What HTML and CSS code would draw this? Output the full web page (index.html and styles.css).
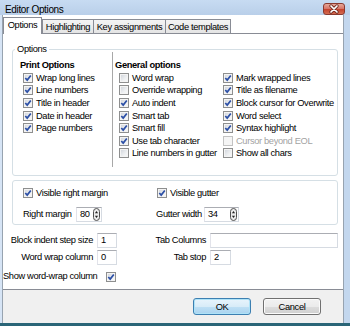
FILE: index.html
```html
<!DOCTYPE html>
<html>
<head>
<meta charset="utf-8">
<link rel="stylesheet" href="styles.css">
</head>
<body>
<div class="window">
  <div class="titlebar">
    <span class="title">Editor Options</span>
    <span class="close"><svg viewBox="0 0 22 12" width="22" height="12"><path d="M8 3 L14 9 M14 3 L8 9" stroke="#6e2a22" stroke-width="3.2" stroke-linecap="round"/><path d="M8 3 L14 9 M14 3 L8 9" stroke="#fff" stroke-width="1.7" stroke-linecap="round"/></svg></span>
  </div>
  <div class="frame">
    <div class="client">
      <div class="tabs">
        <div class="tab active">Options</div>
        <div class="tab t-hl">Highlighting</div>
        <div class="tab t-key">Key assignments</div>
        <div class="tab t-code">Code templates</div>
      </div>
      <div class="panel">
        <fieldset class="group-options">
          <legend>Options</legend>
          <div class="col col-print">
            <div class="head">Print Options</div>
            <div class="cb"><span class="box"><svg viewBox="0 0 8 8"><path d="M1.3 4 L3.2 6.1 L6.8 1.5"/></svg></span><span>Wrap long lines</span></div>
            <div class="cb"><span class="box"><svg viewBox="0 0 8 8"><path d="M1.3 4 L3.2 6.1 L6.8 1.5"/></svg></span><span>Line numbers</span></div>
            <div class="cb"><span class="box"><svg viewBox="0 0 8 8"><path d="M1.3 4 L3.2 6.1 L6.8 1.5"/></svg></span><span>Title in header</span></div>
            <div class="cb"><span class="box"><svg viewBox="0 0 8 8"><path d="M1.3 4 L3.2 6.1 L6.8 1.5"/></svg></span><span>Date in header</span></div>
            <div class="cb"><span class="box"><svg viewBox="0 0 8 8"><path d="M1.3 4 L3.2 6.1 L6.8 1.5"/></svg></span><span>Page numbers</span></div>
          </div>
          <div class="sep"></div>
          <div class="col col-general">
            <div class="head">General options</div>
            <div class="cb"><span class="box"></span><span>Word wrap</span></div>
            <div class="cb"><span class="box"></span><span>Override wrapping</span></div>
            <div class="cb"><span class="box"><svg viewBox="0 0 8 8"><path d="M1.3 4 L3.2 6.1 L6.8 1.5"/></svg></span><span>Auto indent</span></div>
            <div class="cb"><span class="box"><svg viewBox="0 0 8 8"><path d="M1.3 4 L3.2 6.1 L6.8 1.5"/></svg></span><span>Smart tab</span></div>
            <div class="cb"><span class="box"><svg viewBox="0 0 8 8"><path d="M1.3 4 L3.2 6.1 L6.8 1.5"/></svg></span><span>Smart fill</span></div>
            <div class="cb"><span class="box"><svg viewBox="0 0 8 8"><path d="M1.3 4 L3.2 6.1 L6.8 1.5"/></svg></span><span>Use tab character</span></div>
            <div class="cb"><span class="box"></span><span>Line numbers in gutter</span></div>
          </div>
          <div class="col col-extra">
            <div class="cb"><span class="box"><svg viewBox="0 0 8 8"><path d="M1.3 4 L3.2 6.1 L6.8 1.5"/></svg></span><span>Mark wrapped lines</span></div>
            <div class="cb"><span class="box"><svg viewBox="0 0 8 8"><path d="M1.3 4 L3.2 6.1 L6.8 1.5"/></svg></span><span>Title as filename</span></div>
            <div class="cb"><span class="box"><svg viewBox="0 0 8 8"><path d="M1.3 4 L3.2 6.1 L6.8 1.5"/></svg></span><span>Block cursor for Overwrite</span></div>
            <div class="cb"><span class="box"><svg viewBox="0 0 8 8"><path d="M1.3 4 L3.2 6.1 L6.8 1.5"/></svg></span><span>Word select</span></div>
            <div class="cb"><span class="box"><svg viewBox="0 0 8 8"><path d="M1.3 4 L3.2 6.1 L6.8 1.5"/></svg></span><span>Syntax highlight</span></div>
            <div class="cb disabled"><span class="box"></span><span>Cursor beyond EOL</span></div>
            <div class="cb"><span class="box"></span><span>Show all chars</span></div>
          </div>
        </fieldset>

        <div class="group-margins">
          <div class="mcol mcol-a">
            <div class="cb"><span class="box"><svg viewBox="0 0 8 8"><path d="M1.3 4 L3.2 6.1 L6.8 1.5"/></svg></span><span>Visible right margin</span></div>
            <div class="field">
              <span class="flabel fl-rm">Right margin</span>
              <div class="inp spin-inp w-rm"><span>80</span><svg class="spin" viewBox="0 0 7 13"><rect x="0.5" y="0.5" width="6" height="12" rx="3" fill="#ececec" stroke="#505050"/><path d="M1.9 5.3 L3.5 3 L5.1 5.3Z M1.9 7.7 L3.5 10 L5.1 7.7Z" fill="#202020"/></svg></div>
            </div>
          </div>
          <div class="mcol mcol-b">
            <div class="cb"><span class="box"><svg viewBox="0 0 8 8"><path d="M1.3 4 L3.2 6.1 L6.8 1.5"/></svg></span><span>Visible gutter</span></div>
            <div class="field">
              <span class="flabel fl-gw">Gutter width</span>
              <div class="inp spin-inp w-gw"><span>34</span><svg class="spin" viewBox="0 0 7 13"><rect x="0.5" y="0.5" width="6" height="12" rx="3" fill="#ececec" stroke="#505050"/><path d="M1.9 5.3 L3.5 3 L5.1 5.3Z M1.9 7.7 L3.5 10 L5.1 7.7Z" fill="#202020"/></svg></div>
            </div>
          </div>
        </div>

        <div class="fields">
          <span class="glabel">Block indent step size</span>
          <div class="inp">1</div>
          <span class="glabel">Tab Columns</span>
          <div class="inp"></div>

          <span class="glabel">Word wrap column</span>
          <div class="inp">0</div>
          <span class="glabel">Tab stop</span>
          <div class="inp w-ts">2</div>

          <span class="glabel row3">Show word-wrap column</span>
          <div class="row3 cb-cell"><span class="box"><svg viewBox="0 0 8 8"><path d="M1.3 4 L3.2 6.1 L6.8 1.5"/></svg></span></div>
        </div>
      </div>
      <div class="footer">
        <button class="btn default">OK</button>
        <button class="btn">Cancel</button>
      </div>
    </div>
  </div>
</div>
</body>
</html>
```

FILE: styles.css
```css
html, body {
  margin: 0;
  padding: 0;
  background: #fff;
}

body {
  font-family: "Liberation Sans", Arial, sans-serif;
  font-size: 9.3px;
  letter-spacing: -0.35px;
  color: #000;
}

.window {
  width: 350px;
  height: 326px;
  box-sizing: border-box;
  display: flex;
  flex-direction: column;
  border-bottom: 3px solid #2a6577;
  background: #c6d9ef;
}

.titlebar {
  height: 15px;
  flex: none;
  display: flex;
  justify-content: space-between;
  align-items: flex-start;
  padding: 0 5px 0 5px;
  background: linear-gradient(#c7dbf2, #b9cfe9);
}

.title {
  font-size: 10px;
  line-height: 13px;
  padding-top: 3px;
  color: #000;
}

.close {
  width: 22px;
  height: 12px;
  margin-top: 3px;
  box-sizing: border-box;
  border: 1px solid #8a3a30;
  border-radius: 3px;
  background: linear-gradient(#e6a899 0%, #d8776a 45%, #c5452f 55%, #d56c50 100%);
  display: flex;
  align-items: center;
  justify-content: center;
  overflow: hidden;
}

.close svg {
  display: block;
  margin: -1px;
}

.frame {
  flex: 1;
  display: flex;
  border-left: 2px solid #d6e4f5;
  border-right: 6px solid #c3d7ee;
  min-height: 0;
}

.client {
  flex: 1;
  min-width: 0;
  display: flex;
  flex-direction: column;
  background: #fff;
  border-left: 1px solid #97a3b0;
  border-right: 1px solid #97a3b0;
}

.tabs {
  height: 18px;
  flex: none;
  display: flex;
  align-items: flex-end;
}

.tab {
  box-sizing: border-box;
  height: 14px;
  border: 1px solid #898c95;
  border-bottom: none;
  background: linear-gradient(#f4f4f4, #e4e4e4);
  display: flex;
  align-items: center;
  justify-content: center;
  white-space: nowrap;
  line-height: 12px;
}

.tab.active {
  width: 39px;
  height: 17px;
  margin-bottom: -1px;
  background: #fff;
  z-index: 1;
  padding-bottom: 2px;
}

.t-hl { width: 52px; }
.t-key { width: 73px; margin-left: -1px; }
.t-code { width: 66px; margin-left: -1px; }

.panel {
  height: 257px;
  box-sizing: border-box;
  flex: none;
  border-top: 1px solid #898c95;
  border-bottom: 1px solid #898c95;
  background: #fff;
}

/* ---------- Options group ---------- */
.group-options {
  margin: 9px 5px 0 9px;
  padding: 0;
  min-width: 0;
  border: 1px solid #d5dfe5;
  border-radius: 3px;
  display: flex;
}

.group-options legend {
  padding: 0 2px;
  margin-left: 2px;
  line-height: 12px;
}

.col {
  box-sizing: border-box;
  height: 120px;
  padding-top: 4px;
}

.col-print {
  width: 99px;
  padding-left: 7px;
}

.col-print .cb { margin-left: 3px; }

.sep {
  width: 0;
  height: 115px;
  margin-top: -3px;
  border-left: 1px solid #a8a8a8;
}

.col-general {
  width: 109px;
  padding-left: 2px;
}

.col-general .cb { margin-left: 4px; }

.col-extra {
  flex: 1;
  padding-left: 1px;
  padding-top: 16.6px;
}

.head {
  height: 12.6px;
  line-height: 12.6px;
  font-weight: bold;
  white-space: nowrap;
}

.cb {
  height: 12.6px;
  display: flex;
  align-items: center;
  white-space: nowrap;
}

.box {
  width: 10px;
  height: 10px;
  box-sizing: border-box;
  flex: none;
  margin-right: 3px;
  border: 1px solid #8e8f8f;
  background: linear-gradient(135deg, #cdd1d8 0%, #eef0f2 60%, #fafafa 100%);
  box-shadow: inset 0 0 0 1px #f4f4f4;
  display: flex;
  align-items: center;
  justify-content: center;
}

.box svg {
  width: 8px;
  height: 8px;
  display: block;
}

.box svg path {
  fill: none;
  stroke: #2c4fa6;
  stroke-width: 1.7;
}

.cb.disabled {
  color: #a3a3a3;
}

.cb.disabled .box {
  border-color: #c3c3c3;
  background: #f5f5f5;
  box-shadow: none;
}

/* ---------- Margins group ---------- */
.group-margins {
  margin: 4px 5px 0 9px;
  height: 45px;
  box-sizing: border-box;
  border: 1px solid #d5dfe5;
  border-radius: 3px;
  padding: 6px 0 0 10px;
  display: flex;
}

.mcol-a { width: 133px; }
.mcol-b .cb { margin-left: 1px; }

.field {
  margin-top: 7px;
  display: flex;
  align-items: center;
  height: 15px;
}

.flabel {
  white-space: nowrap;
}

.fl-rm { width: 53px; }
.fl-gw { width: 48px; }

.inp {
  box-sizing: border-box;
  height: 15px;
  border: 1px solid #d6dbe2;
  border-top-color: #abadb3;
  border-left-color: #e2e3ea;
  background: #fff;
  padding-left: 3px;
  line-height: 13px;
  white-space: nowrap;
}

.spin-inp {
  display: flex;
  align-items: center;
  justify-content: space-between;
  padding-right: 1px;
}

.spin {
  width: 7px;
  height: 13px;
  display: block;
}

.w-rm { width: 26px; }
.w-gw { width: 35px; }

/* ---------- Lower fields ---------- */
.fields {
  margin: 8px 0 0 0;
  display: grid;
  grid-template-columns: 90px 20px 85px 128px;
  grid-template-rows: 15px 15px 16px;
  column-gap: 4px;
  row-gap: 2px;
}

.glabel {
  text-align: right;
  line-height: 15px;
  white-space: nowrap;
}

.w-ts {
  width: 21px;
}

.row3 {
  align-self: end;
  height: 13px;
  line-height: 13px;
}

.cb-cell {
  display: flex;
  align-items: center;
  padding-left: 9px;
}

.cb-cell .box { margin-right: 0; }

/* ---------- Footer ---------- */
.footer {
  flex: 1;
  background: #f0f0f0;
  display: flex;
  justify-content: flex-end;
  align-items: flex-start;
  gap: 12px;
  padding: 8px 22px 0 0;
}

.btn {
  width: 58px;
  height: 17px;
  box-sizing: border-box;
  margin: 0;
  padding: 0;
  font: inherit;
  letter-spacing: inherit;
  color: #000;
  border: 1px solid #707070;
  border-radius: 3px;
  background: linear-gradient(#f2f2f2 0%, #ebebeb 50%, #dddddd 51%, #cfcfcf 100%);
  box-shadow: inset 0 0 0 1px #fbfbfb;
}

.btn.default {
  border-color: #3c7fb1;
  background: linear-gradient(#e8f4fc 0%, #d8ecf8 50%, #bfe0f5 51%, #a9d3ef 100%);
  box-shadow: inset 0 0 0 1px #aee3f8;
}
```
